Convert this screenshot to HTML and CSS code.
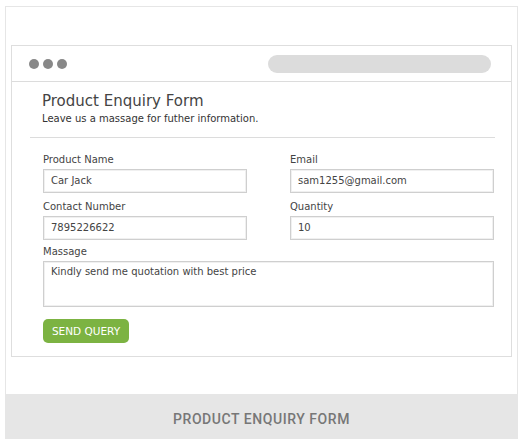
FILE: index.html
```html
<!DOCTYPE html>
<html>
<head>
<meta charset="utf-8">
<link rel="stylesheet" href="styles.css">
</head>
<body>
<div class="card">
  <div class="stage">
    <div class="browser">
      <div class="bar">
        <div class="dots"><span></span><span></span><span></span></div>
        <div class="url"></div>
      </div>
      <div class="content">
        <h1 class="title">Product Enquiry Form</h1>
        <p class="sub">Leave us a massage for futher information.</p>
        <div class="rule"></div>
        <div class="grid">
          <div class="field">
            <label>Product Name</label>
            <div class="input">Car Jack</div>
          </div>
          <div class="field">
            <label>Email</label>
            <div class="input">sam1255@gmail.com</div>
          </div>
          <div class="field">
            <label>Contact Number</label>
            <div class="input">7895226622</div>
          </div>
          <div class="field">
            <label>Quantity</label>
            <div class="input">10</div>
          </div>
          <div class="field wide">
            <label>Massage</label>
            <div class="input area">Kindly send me quotation with best price</div>
          </div>
        </div>
        <div class="btn">SEND QUERY</div>
      </div>
    </div>
  </div>
  <div class="footer">PRODUCT ENQUIRY FORM</div>
</div>
</body>
</html>
```
FILE: styles.css
```css
* { box-sizing: border-box; }
body {
  margin: 0;
  background: #fff;
  font-family: "DejaVu Sans", "Open Sans", sans-serif;
  color: #444;
}
.card {
  margin: 6px 0 0 5px;
  width: 513px;
  height: 433px;
  border: 1px solid #e6e6e6;
  border-bottom: none;
  display: flex;
  flex-direction: column;
}
.stage {
  flex: 1;
  padding: 38px 5px 0 5px;
}
.browser {
  border: 1px solid #dedede;
  height: 312px;
}
.bar {
  height: 36px;
  border-bottom: 1px solid #dcdcdc;
  display: flex;
  align-items: center;
  justify-content: space-between;
  padding: 0 20px 0 17px;
}
.dots { display: flex; gap: 4px; }
.dots span {
  width: 10px; height: 10px; border-radius: 50%;
  background: #888;
}
.url {
  width: 223px; height: 18px; border-radius: 9px;
  background: #dcdcdc;
}
.content {
  padding: 10px 16px 0 18px;
}
.title {
  margin: 0 0 0 12px;
  font-size: 15px;
  font-weight: normal;
  color: #444;
  line-height: 18px;
}
.sub {
  margin: 2px 0 0 12px;
  font-size: 10px;
  line-height: 14px;
  color: #333;
}
.rule {
  margin-top: 11px;
  border-top: 1px solid #dcdcdc;
}
.grid {
  margin: 15px 0 0 13px;
  display: grid;
  grid-template-columns: 204px 204px;
  column-gap: 43px;
  row-gap: 7px;
}
.wide { grid-column: 1 / 3; margin-top: -2px; }
.field label {
  display: block;
  font-size: 10px;
  line-height: 14px;
  color: #444;
  margin-bottom: 2px;
}
.input {
  height: 24px;
  border: 1px solid #cfcfcf;
  box-shadow: inset 0 0 0 1px #f0f0f0;
  font-size: 10px;
  line-height: 22px;
  padding-left: 7px;
  color: #444;
}
.area {
  height: 46px;
  line-height: 18px;
  padding-top: 1px;
}
.btn {
  margin: 12px 0 0 13px;
  width: 86px;
  height: 24px;
  border-radius: 5px;
  background: #7cb342;
  color: #fff;
  font-size: 10.5px;
  line-height: 24px;
  text-align: center;
}
.footer {
  height: 45px;
  background: #e6e6e6;
  color: #777;
  font-family: "Roboto", sans-serif;
  font-size: 14px;
  font-weight: 500;
  text-align: center;
  line-height: 45px;
  padding-top: 3px;
  letter-spacing: 0.55px;
}
```
